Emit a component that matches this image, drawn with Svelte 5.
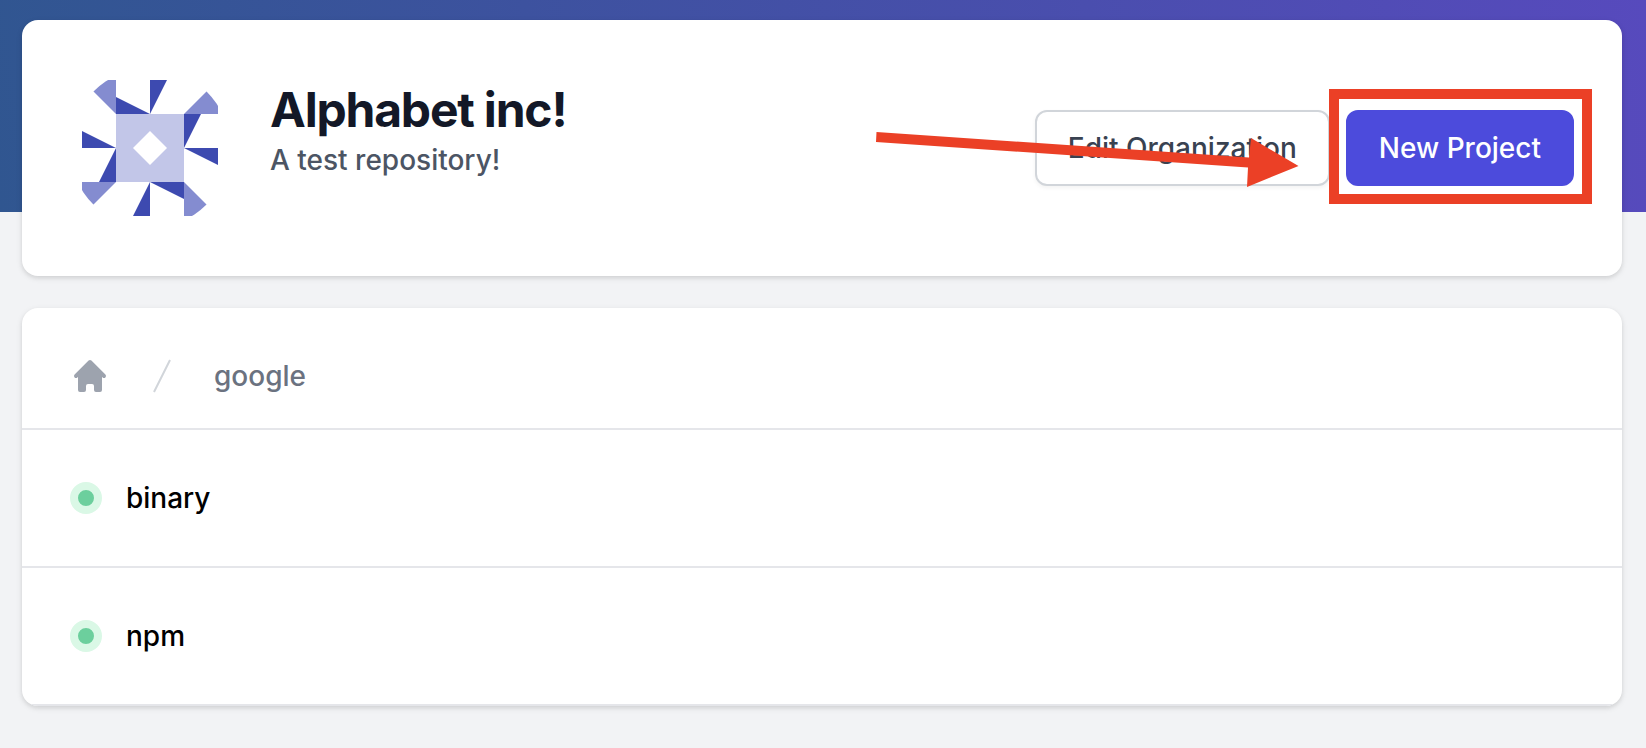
<script>
  const projects = ['binary', 'npm'];
  const turns = [0, 90, 180, 270];
</script>

<div class="page">
  <main>
    <section class="card profile">
      <svg class="avatar" viewBox="0 0 160 160" role="img" aria-label="Alphabet inc! avatar">
        <clipPath id="round"><circle cx="80" cy="80" r="80" /></clipPath>
        <g clip-path="url(#round)">
          {#each turns as turn}
            <g transform="rotate({turn} 80 80)">
              <path fill="#3d4ab0" d="M80 12h17L80 46zM46 29l34 17H46z" />
              <path fill="#848cd0" d="M46 12v34L12 12z" />
            </g>
          {/each}
          <path fill="#c2c6e8" fill-rule="evenodd" d="M46 46h68v68H46zM80 63L63 80l17 17 17-17z" />
        </g>
      </svg>
      <div class="about">
        <h1>Alphabet inc!</h1>
        <p>A test repository!</p>
      </div>
      <div class="actions">
        <button type="button" class="secondary">
          Edit Organization
          <svg class="arrow" viewBox="0 0 424 60" aria-hidden="true">
            <path fill="#eb4026" d="M.5 5L373 30.500 375 11l47.500 28-51.500 21 1-19.500L0 15z" />
          </svg>
        </button>
        <button type="button" class="primary">New Project<span class="highlight"></span></button>
      </div>
    </section>

    <section class="card">
      <nav aria-label="Breadcrumb">
        <a href="#home" aria-label="Home">
          <svg class="icon home" viewBox="0 0 20 20">
            <path d="M10.707 2.293a1 1 0 00-1.414 0l-7 7a1 1 0 001.414 1.414L4 10.414V17a1 1 0 001 1h2a1 1 0 001-1v-2a1 1 0 011-1h2a1 1 0 011 1v2a1 1 0 001 1h2a1 1 0 001-1v-6.586l.293.293a1 1 0 001.414-1.414l-7-7z" />
          </svg>
        </a>
        <svg class="icon slash" viewBox="0 0 20 20" aria-hidden="true">
          <path d="M5.555 17.776l8-16 .894.448-8 16-.894-.448z" />
        </svg>
        <a href="#google">google</a>
      </nav>
      <ul>
        {#each projects as project}
          <li>
            <span class="status"></span>
            <a href="#{project}">{project}</a>
          </li>
        {/each}
      </ul>
    </section>
  </main>
</div>

<style>
  :global(body) {
    margin: 0;
    background: #f2f3f5;
  }
  .page {
    box-sizing: border-box;
    min-height: 100vh;
    padding: 20px 24px 42px 22px;
    font: 500 28px/40px Inter, sans-serif;
    background: linear-gradient(80deg, #305690, #574abd) top / 100% 212px no-repeat;
  }
  main {
    display: flex;
    flex-direction: column;
    gap: 32px;
  }
  .card {
    background: #fff;
    border-radius: 16px;
    box-shadow: 0 2px 6px rgba(0, 0, 0, 0.1), 0 2px 4px rgba(0, 0, 0, 0.06);
  }
  .profile {
    display: flex;
    align-items: center;
    padding: 48px;
  }
  .avatar {
    width: 160px;
    height: 160px;
    flex: none;
  }
  .about {
    flex: 1;
    align-self: flex-start;
    margin: 12px 0 0 40px;
  }
  h1 {
    margin: 0;
    font-size: 48px;
    line-height: 60px;
    font-weight: 700;
    letter-spacing: -0.025em;
    color: #131827;
  }
  p {
    margin: 0;
    color: #4c5564;
  }
  .actions {
    display: flex;
    gap: 16px;
  }
  button {
    position: relative;
    padding: 16px 31px;
    border: 2px solid #d1d5da;
    border-radius: 12px;
    font: inherit;
    white-space: nowrap;
    cursor: pointer;
  }
  .secondary {
    background: #fff;
    color: #394251;
    box-shadow: 0 2px 4px rgba(0, 0, 0, 0.05);
  }
  .primary {
    background: #4c4bdc;
    border-color: #4c4bdc;
    color: #fff;
  }
  .arrow {
    position: absolute;
    right: 28px;
    top: 15px;
    width: 424px;
    height: 60px;
    pointer-events: none;
  }
  .highlight {
    position: absolute;
    inset: -23px -20px -20px -19px;
    border: 10px solid #eb4026;
    pointer-events: none;
  }
  nav {
    display: flex;
    align-items: center;
    gap: 32px;
    padding: 48px 48px 32px;
    border-bottom: 2px solid #e5e6ea;
    color: #6b7280;
  }
  a {
    color: inherit;
    text-decoration: none;
  }
  .icon {
    display: block;
    width: 40px;
    height: 40px;
  }
  .home {
    fill: #9da3ae;
  }
  .slash {
    fill: #d1d5da;
  }
  ul {
    margin: 0;
    padding: 0;
    list-style: none;
    overflow: hidden;
    border-radius: 0 0 16px 16px;
  }
  li {
    display: flex;
    align-items: center;
    gap: 24px;
    padding: 48px;
    border-bottom: 2px solid #e5e6ea;
    color: #000;
  }
  .status {
    box-sizing: border-box;
    width: 32px;
    height: 32px;
    border: 8px solid #daf8e6;
    border-radius: 50%;
    background: #6ccf9d;
  }
</style>
